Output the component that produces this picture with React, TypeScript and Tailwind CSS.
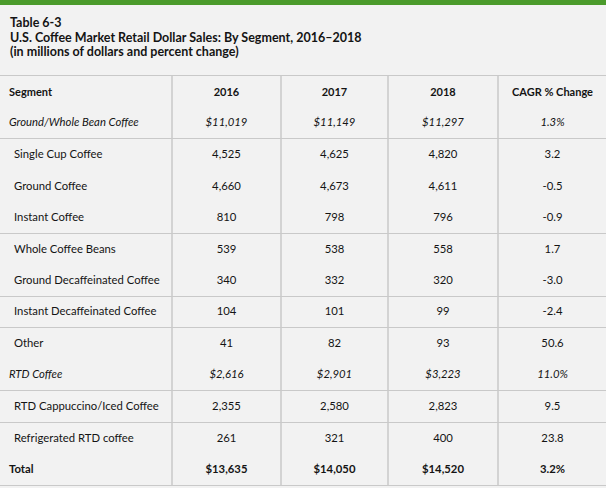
type Row = {
  label: string;
  values: string[];
  kind?: 'head' | 'group' | 'item' | 'total';
  line?: boolean; // draw a rule under the row
};

const rows: Row[] = [
  { label: 'Segment', values: ['2016', '2017', '2018', 'CAGR % Change'], kind: 'head' },
  { label: 'Ground/Whole Bean Coffee', values: ['$11,019', '$11,149', '$11,297', '1.3%'], kind: 'group', line: true },
  { label: 'Single Cup Coffee', values: ['4,525', '4,625', '4,820', '3.2'] },
  { label: 'Ground Coffee', values: ['4,660', '4,673', '4,611', '-0.5'] },
  { label: 'Instant Coffee', values: ['810', '798', '796', '-0.9'], line: true },
  { label: 'Whole Coffee Beans', values: ['539', '538', '558', '1.7'] },
  { label: 'Ground Decaffeinated Coffee', values: ['340', '332', '320', '-3.0'], line: true },
  { label: 'Instant Decaffeinated Coffee', values: ['104', '101', '99', '-2.4'], line: true },
  { label: 'Other', values: ['41', '82', '93', '50.6'] },
  { label: 'RTD Coffee', values: ['$2,616', '$2,901', '$3,223', '11.0%'], kind: 'group', line: true },
  { label: 'RTD Cappuccino/Iced Coffee', values: ['2,355', '2,580', '2,823', '9.5'], line: true },
  { label: 'Refrigerated RTD coffee', values: ['261', '321', '400', '23.8'] },
  { label: 'Total', values: ['$13,635', '$14,050', '$14,520', '3.2%'], kind: 'total', line: true },
];

export default function App() {
  return (
    <div
      className="w-[606px] h-[488px] bg-[#f2f2f2] text-[#141414] overflow-hidden"
      style={{ fontFamily: 'Lato, "Open Sans", sans-serif' }}
    >
      <div className="h-[5px] bg-[#4b9b2c]" />
      <div className="h-[70px] pl-[10px] pt-[11px] text-[12.5px] font-bold leading-[14.5px]">
        <div>Table 6-3</div>
        <div>U.S. Coffee Market Retail Dollar Sales: By Segment, 2016–2018</div>
        <div>(in millions of dollars and percent change)</div>
      </div>

      <div className="border-t border-[#c9c9c9]">
        {rows.map((r) => {
          const kind = r.kind ?? 'item';
          const weight =
            kind === 'head' || kind === 'total' ? 'font-bold' : kind === 'group' ? 'italic' : '';
          const size = kind === 'head' ? 'text-[11px]' : 'text-[11.3px]';
          return (
            <div
              key={r.label}
              className={`grid grid-cols-[171px_109px_107px_110px_1fr] h-[31.5px] ${
                r.line ? 'border-b border-[#c9c9c9]' : ''
              } ${weight} ${size}`}
            >
              <div className={`flex items-center ${kind === 'item' ? 'pl-[14px]' : 'pl-[9px]'}`}>
                {r.label}
              </div>
              {r.values.map((v, i) => (
                <div key={i} className="flex items-center justify-center border-l-2 border-[#d3d3d3]">
                  {v}
                </div>
              ))}
            </div>
          );
        })}
      </div>
    </div>
  );
}
